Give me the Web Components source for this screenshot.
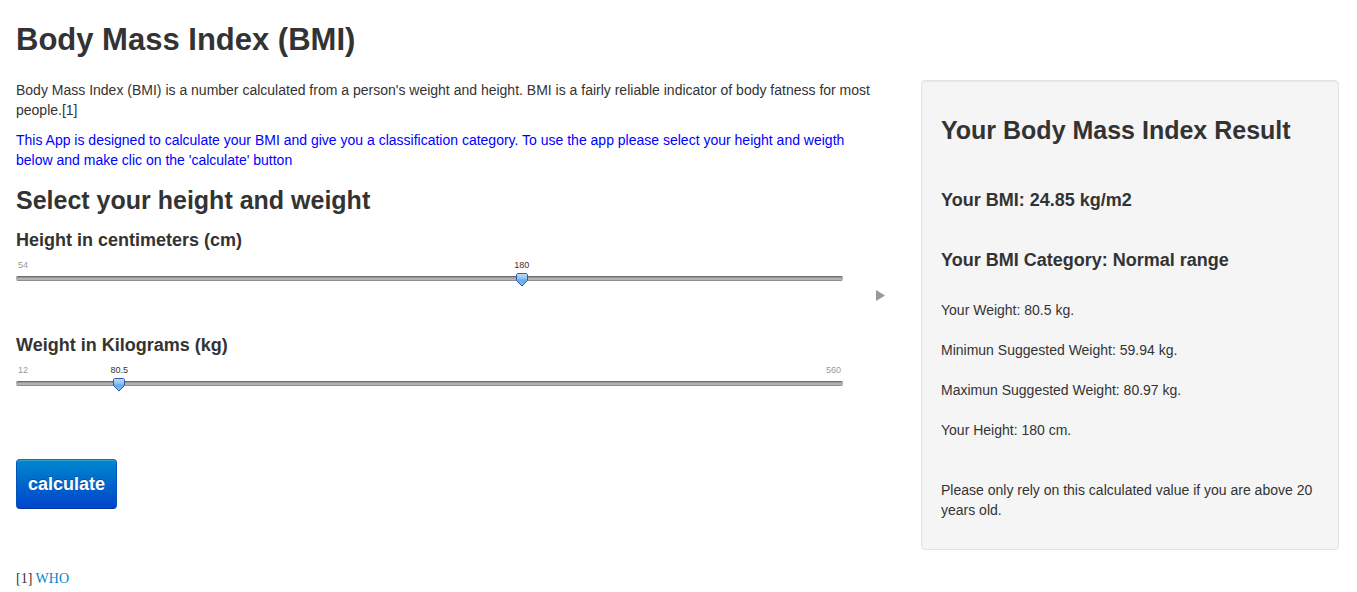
<!DOCTYPE html>
<html lang="en">
<head>
<meta charset="utf-8">
<title>Body Mass Index (BMI)</title>
<style>
  body { margin: 0; background: #fff; color: #333; font: 14px/20px "Liberation Sans", Arial, sans-serif; }
</style>
</head>
<body>
<bmi-page>
  <page-title slot="header">Body Mass Index (BMI)</page-title>
  <bmi-intro slot="main">
    Body Mass Index (BMI) is a number calculated from a person's weight and height. BMI is a fairly reliable indicator of body fatness for most people.[1]
    <span slot="note">This App is designed to calculate your BMI and give you a classification category. To use the app please select your height and weigth below and make clic on the 'calculate' button</span>
  </bmi-intro>
  <bmi-form slot="main"></bmi-form>
  <bmi-result slot="aside"></bmi-result>
  <source-note slot="main" href="https://www.who.int/" mark="[1]">WHO</source-note>
</bmi-page>

<script>
const define = (name, html, setup) => {
  const template = document.createElement('template');
  template.innerHTML = html;
  customElements.define(name, class extends HTMLElement {
    constructor() {
      super();
      this.attachShadow({ mode: 'open' }).append(template.content.cloneNode(true));
    }
    connectedCallback() { if (setup) setup(this, s => this.shadowRoot.querySelector(s)); }
  });
};

define('bmi-page', `
<style>
  :host { display: block; padding: 20px 18px 0 16px; }
  .columns { display: grid; grid-template-columns: minmax(0, 872fr) minmax(0, 418fr); gap: 33px; align-items: start; margin-top: 20px; }
</style>
<header><slot name="header"></slot></header>
<div class="columns">
  <main><slot name="main"></slot></main>
  <aside><slot name="aside"></slot></aside>
</div>`, el => {
  el.addEventListener('calculate', e => el.querySelector('bmi-result').update(e.detail.height, e.detail.weight));
});

define('page-title', `
<style>
  :host { display: block; }
  h1 { margin: 0; font-size: 31px; line-height: 40px; }
</style>
<h1><slot></slot></h1>`);

define('bmi-intro', `
<style>
  :host { display: block; padding-right: 10px; }
  p { margin: 0 0 10px; }
  .note { color: #00f; }
</style>
<p><slot></slot></p>
<p class="note"><slot name="note"></slot></p>`);

define('range-slider', `
<style>
  :host { display: block; }
  label { display: block; font-size: 18px; font-weight: bold; line-height: 20px; }
  .row { display: grid; grid-template-columns: 1fr 12px; column-gap: 33px; }
  .slider { margin-top: 10px; height: 45px; }
  .scale { position: relative; display: flex; justify-content: space-between; padding: 0 2px; height: 10px; font-size: 9px; line-height: 10px; color: #999; }
  output { position: absolute; top: 0; transform: translateX(-50%); color: #333; }
  .track { display: flex; height: 5px; margin-top: 6px; border-radius: 2px; background: linear-gradient(#6c6c6c 0 1px, #999 1px 2px, #b2b2b2 2px 4px, #8f8f8f 4px); }
  input { appearance: none; flex: none; width: calc(100% + 12px); height: 5px; margin: 0 -6px; background: none; }
  input::-webkit-slider-runnable-track { height: 5px; }
  input::-webkit-slider-thumb { appearance: none; width: 12px; height: 14px; margin-top: -3px; cursor: pointer;
    background: url("data:image/svg+xml,%3Csvg xmlns='http://www.w3.org/2000/svg' viewBox='0 0 12 14'%3E%3Cdefs%3E%3ClinearGradient id='g' x2='0' y2='1'%3E%3Cstop stop-color='%23c4ddf5'/%3E%3Cstop offset='.45' stop-color='%238cbcec'/%3E%3Cstop offset='.5' stop-color='%2366a9e6'/%3E%3Cstop offset='1' stop-color='%2380c4f5'/%3E%3C/linearGradient%3E%3C/defs%3E%3Cpath d='M1.5.5h9l1 1v6L6 13 .5 7.5v-6z' fill='url(%23g)' stroke='%232c58ae'/%3E%3C/svg%3E") center / 12px 14px no-repeat; }
  .play { align-self: start; margin-top: 40px; padding: 0; border: 0; width: 12px; height: 11px; background: none; line-height: 0; cursor: pointer; }
  .play svg { display: block; }
</style>
<label for="range"><slot></slot></label>
<div class="row">
  <div class="slider">
    <div class="scale"><span class="min"></span><output for="range"></output><span class="max"></span></div>
    <div class="track"><input id="range" type="range"></div>
  </div>
</div>`, (el, $) => {
  const input = $('input'), output = $('output');
  input.min = el.getAttribute('min');
  input.max = el.getAttribute('max');
  input.step = el.getAttribute('step');
  input.value = el.getAttribute('value');
  const update = () => {
    output.value = input.value;
    output.style.left = (input.value - input.min) / (input.max - input.min) * 100 + '%';
    el.value = +input.value;
  };
  $('.min').textContent = input.min;
  if (!el.hasAttribute('playable')) $('.max').textContent = input.max;
  else {
    const play = document.createElement('button');
    play.className = 'play';
    play.type = 'button';
    play.setAttribute('aria-label', 'Play');
    play.innerHTML = '<svg width="9" height="11" viewBox="0 0 9 11"><path d="M0 0l9 5.5L0 11z" fill="#999"/></svg>';
    $('.row').append(play);
    let timer = 0;
    play.addEventListener('click', () => {
      if (timer) { clearInterval(timer); timer = 0; return; }
      timer = setInterval(() => { input.stepUp(); update(); }, 100);
    });
  }
  input.addEventListener('input', update);
  update();
});

define('bmi-form', `
<style>
  :host { display: block; }
  h3 { margin: 0; font-size: 25px; line-height: 40px; }
  range-slider { margin-top: 10px; }
  range-slider + range-slider { margin-top: 30px; }
  .submit { display: block; box-sizing: border-box; height: 50px; margin-top: 49px; padding: 0 11px; border: 1px solid; border-color: #0074b8 #0055b8 #0034a0; border-radius: 4px;
    background: linear-gradient(#08c, #04c); box-shadow: inset 0 1px 0 rgba(255,255,255,.2); color: #fff;
    font: bold 18px/20px "Liberation Sans", Arial, sans-serif; text-shadow: 0 -1px 0 rgba(0,0,0,.25); cursor: pointer; }
</style>
<h3>Select your height and weight</h3>
<range-slider class="height" min="54" max="260" step="1" value="180" playable>Height in centimeters (cm)</range-slider>
<range-slider class="weight" min="12" max="560" step="0.5" value="80.5">Weight in Kilograms (kg)</range-slider>
<button class="submit" type="button">calculate</button>`, (el, $) => {
  $('.submit').addEventListener('click', () => el.dispatchEvent(new CustomEvent('calculate', {
    bubbles: true, detail: { height: $('.height').value, weight: $('.weight').value }
  })));
});

define('bmi-result', `
<style>
  :host { display: block; padding: 29px 19px; border: 1px solid #e3e3e3; border-radius: 4px; background: #f5f5f5; box-shadow: inset 0 1px 1px rgba(0,0,0,.05); }
  h3 { margin: 0 0 40px; font-size: 25px; line-height: 40px; }
  h4 { margin: 0 0 40px; font-size: 18px; line-height: 20px; }
  h4 + p { margin-top: -10px; }
  p { margin: 0 0 20px; }
  .advice { margin: 40px 0 0; }
</style>
<h3>Your Body Mass Index Result</h3>
<h4 class="bmi">Your BMI: 24.85 kg/m2</h4>
<h4 class="category">Your BMI Category: Normal range</h4>
<p class="weight">Your Weight: 80.5 kg.</p>
<p class="low">Minimun Suggested Weight: 59.94 kg.</p>
<p class="high">Maximun Suggested Weight: 80.97 kg.</p>
<p class="height">Your Height: 180 cm.</p>
<p class="advice">Please only rely on this calculated value if you are above 20 years old.</p>`, (el, $) => {
  el.update = (height, weight) => {
    const square = (height / 100) ** 2, bmi = weight / square;
    const category = bmi < 18.5 ? 'Underweight' : bmi < 25 ? 'Normal range' : bmi < 30 ? 'Overweight' : 'Obese';
    $('.bmi').textContent = `Your BMI: ${bmi.toFixed(2)} kg/m2`;
    $('.category').textContent = `Your BMI Category: ${category}`;
    $('.weight').textContent = `Your Weight: ${weight} kg.`;
    $('.low').textContent = `Minimun Suggested Weight: ${(18.5 * square).toFixed(2)} kg.`;
    $('.high').textContent = `Maximun Suggested Weight: ${(24.99 * square).toFixed(2)} kg.`;
    $('.height').textContent = `Your Height: ${height} cm.`;
  };
});

define('source-note', `
<style>
  :host { display: block; margin-top: 60px; font-family: "Liberation Serif", "Times New Roman", serif; }
  a { color: #08c; text-decoration: none; }
</style>
<span></span> <a><slot></slot></a>`, (el, $) => {
  $('span').textContent = el.getAttribute('mark');
  $('a').href = el.getAttribute('href');
});
</script>
</body>
</html>
